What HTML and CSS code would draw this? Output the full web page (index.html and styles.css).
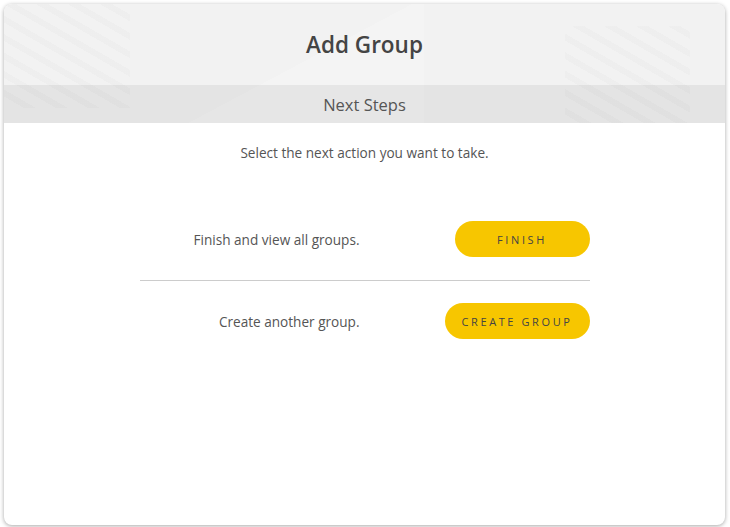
FILE: index.html
```html
<!DOCTYPE html>
<html>
<head>
    <title>Add Group</title>
    <link rel="stylesheet" href="styles.css">
</head>
<body>
    <div class="card">
        <div class="card-head">
            <div class="title">Add Group</div>
            <div class="subtitle">Next Steps</div>
        </div>
        <div class="card-body">
            <p class="intro">Select the next action you want to take.</p>
            <div class="actions">
                <div class="action-row">
                    <span class="action-text">Finish and view all groups.</span>
                    <button class="pill">FINISH</button>
                </div>
                <div class="action-row">
                    <span class="action-text">Create another group.</span>
                    <button class="pill">CREATE GROUP</button>
                </div>
            </div>
        </div>
    </div>
</body>
</html>
```
FILE: styles.css
```css
html, body {
    margin: 0;
    height: 100%;
    background: #fff;
}

body {
    box-sizing: border-box;
    padding: 4px 5px 2px 4px;
    font-family: "Open Sans", "Liberation Sans", sans-serif;
    color: #555;
}

.card {
    height: 100%;
    display: flex;
    flex-direction: column;
    background: #fff;
    border-radius: 8px;
    box-shadow: 0 1px 4px rgba(0, 0, 0, 0.35);
    overflow: hidden;
}

.card-head {
    background-color: #f2f2f2;
    background-image:
        repeating-linear-gradient(30deg, transparent 0 10px, rgba(0, 0, 0, 0.014) 10px 16px),
        repeating-linear-gradient(30deg, transparent 0 10px, rgba(0, 0, 0, 0.014) 10px 16px),
        linear-gradient(152deg, transparent 55%, rgba(255, 255, 255, 0.18) 55%);
    background-size: 126px 104px, 125px 100px, 300px 119px;
    background-position: 0 0, 561px 22px, 120px 0;
    background-repeat: no-repeat;
}

.title {
    height: 81px;
    display: flex;
    align-items: center;
    justify-content: center;
    font-size: 22.5px;
    font-weight: 600;
    color: #444;
}

.subtitle {
    height: 38px;
    display: flex;
    align-items: center;
    justify-content: center;
    background: rgba(0, 0, 0, 0.055);
    font-size: 16.5px;
    color: #555;
}

.card-body {
    padding-top: 20px;
}

.intro {
    margin: 0;
    text-align: center;
    font-size: 13.6px;
    line-height: 20px;
}

.actions {
    width: 450px;
    margin: 35px auto 0;
}

.action-row {
    display: grid;
    grid-template-columns: 1fr 1fr;
    align-items: center;
    padding: 23px 0;
}

.action-row + .action-row {
    border-top: 1px solid #ccc;
    padding-top: 22px;
}

.action-text {
    text-align: right;
    padding-right: 5px;
    font-size: 13.6px;
}

.pill {
    justify-self: end;
    min-width: 135px;
    height: 36px;
    padding: 0 17px;
    border: none;
    border-radius: 18px;
    background: #f7c600;
    color: #444;
    font-family: inherit;
    font-size: 11px;
    font-weight: 500;
    letter-spacing: 2.6px;
}
```
